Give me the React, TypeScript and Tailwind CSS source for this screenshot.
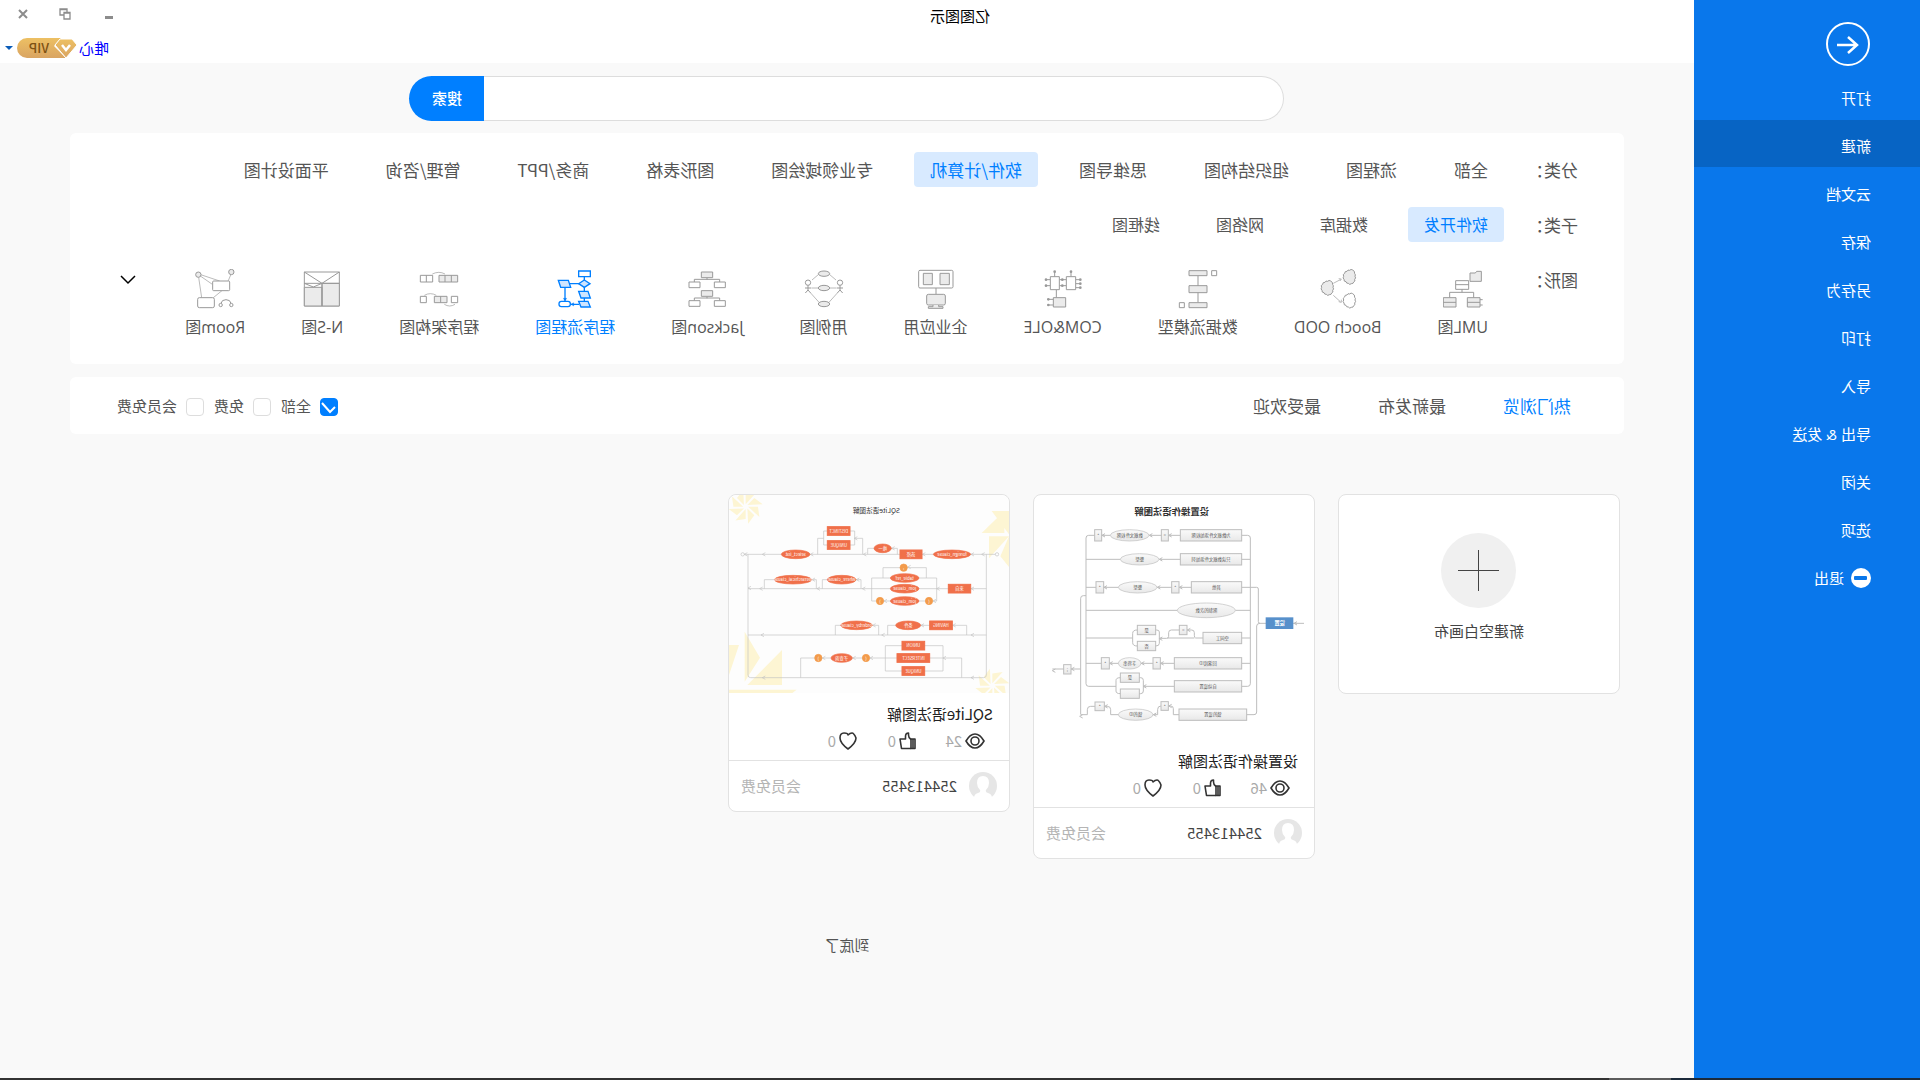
import type { ReactNode } from "react";
import clsx from "clsx";

const menuItems = ["打开", "新建", "云文档", "保存", "另存为", "打印", "导入", "导出 & 发送", "关闭", "选项"];

const categories = [
  "全部",
  "流程图",
  "组织结构图",
  "思维导图",
  "软件/计算机",
  "专业领域绘图",
  "图形表格",
  "商务/PPT",
  "管理/咨询",
  "平面设计图",
];

const subCategories = ["软件开发", "数据库", "网络图", "线框图"];

const sortTabs = ["热门浏览", "最新发布", "最受欢迎"];

const priceFilters = ["全部", "免费", "会员免费"];

const CLOUD =
  "M12 3 q5 -4 9 1 q6 -3 8 3 q7 -1 7 6 q7 3 3 9 q4 5 -1 9 q1 7 -6 7 q-1 6 -7 5 q-4 6 -9 1 q-6 1 -7 -5 q-6 -2 -3 -8 q-5 -4 -1 -9 q-3 -5 1 -8 q-1 -8 6 -11z";

function ShapeIcon({ children, active }: { children: ReactNode; active?: boolean }) {
  return (
    <svg
      viewBox="0 0 120 120"
      className={clsx("size-10", active ? "text-[#007fff]" : "text-[#999999]")}
      fill="#fff"
      stroke="currentColor"
      strokeWidth={active ? 4 : 3}
    >
      {children}
    </svg>
  );
}

const shapes: { name: string; active?: boolean; icon: ReactNode }[] = [
  {
    name: "UML图",
    icon: (
      <>
        <path d="M5 7h14l4 5h16v25H5z" fill="#ebebeb" />
        <path d="M43 35h39v26H43zM43 47h39" />
        <path d="M63 61v9M28 86V70h72v16" fill="none" />
        <path d="M9 86h38v28H9zM81 86h38v28H81z" fill="#ebebeb" />
        <path d="M9 100h38M81 100h38M1 92h8M1 108h8" />
      </>
    ),
  },
  {
    name: "Booch OOD",
    icon: (
      <>
        <path d={CLOUD} transform="translate(4 0)" fill="#ebebeb" />
        <path d={CLOUD} transform="translate(70 33)" fill="#ebebeb" />
        <path d={CLOUD} transform="translate(4 71)" />
        <path d="M74 43L53 32M74 79L53 98M58 29l-8 1 4 6M50 92v8l8-2" fill="none" strokeWidth="2" />
      </>
    ),
  },
  {
    name: "数据流模型",
    icon: (
      <>
        <path d="M60 20v80" />
        <path d="M33 5h54v15H33zM33 50h54v21H33zM33 101h54v15H33z" fill="#ebebeb" />
        <path d="M4 5h15v15H4zM101 101h15v15h-15z" />
      </>
    ),
  },
  {
    name: "COM&OLE",
    icon: (
      <>
        <path d="M36 23V8M85 23V8M22 32H8M22 44H8M22 56H8M50 32h21M50 50h21M98 32h12M98 50h12M80 62v24M89 91h14M89 108h14" />
        <path d="M22 23h28v39H22zM71 23h27v39H71z" />
        <path d="M52 86h37v28H52z" fill="#ebebeb" />
        <g fill="currentColor" stroke="none">
          {[
            [36, 8], [85, 8], [8, 32], [8, 44], [8, 56], [62, 32], [62, 50], [111, 32], [111, 50], [104, 91], [104, 108],
          ].map(([x, y]) => (
            <circle key={`${x}-${y}`} cx={x} cy={y} r="4" />
          ))}
        </g>
      </>
    ),
  },
  {
    name: "企业应用",
    icon: (
      <>
        <rect x="9" y="4" width="103" height="53" rx="4" />
        <path d="M20 13h28v34H20zM71 13h27v34H71z" fill="#ebebeb" />
        <path d="M60 57v19" />
        <rect x="32" y="76" width="56" height="32" rx="5" fill="#ebebeb" />
        <path d="M52 108v5h-13v5h44v-5H69v-5" fill="#ebebeb" />
      </>
    ),
  },
  {
    name: "用例图",
    icon: (
      <>
        <path d="M24 33L44 16M76 16l20 17M22 57h76M20 72l26 29M100 72l-26 29" strokeWidth="2" />
        <ellipse cx="60" cy="14" rx="17" ry="8" fill="#ebebeb" />
        <ellipse cx="60" cy="57" rx="17" ry="8" fill="#ebebeb" />
        <ellipse cx="60" cy="105" rx="17" ry="8" fill="#ebebeb" />
        <circle cx="12" cy="41" r="8" />
        <circle cx="108" cy="41" r="8" />
        <path d="M12 49v15M3 57h18M12 63l-8 9M12 63l8 9M108 49v15M99 57h18M108 63l-8 9M108 63l8 9" />
      </>
    ),
  },
  {
    name: "Jackson图",
    icon: (
      <>
        {[0, 56].map((y) => (
          <g key={y} transform={`translate(0 ${y})`}>
            <path d="M60 26v6M22 39v-8h76v8" fill="none" />
            <path d="M43 9h34v17H43z" fill="#ebebeb" />
            <path d="M5 39h33v17H5zM81 39h33v17H81z" />
          </g>
        ))}
      </>
    ),
  },
  {
    name: "程序流程图",
    active: true,
    icon: (
      <>
        <path d="M32 22v75M48 44h28M90 55v40M48 106h26" fill="none" />
        <path d="M14 6h35v17H14z" />
        <path d="M32 33l17 11-17 11-17-11z" fill="#cfe5ff" />
        <path d="M80 34h30l-7 21H73zM21 67h28l-7 20H14zM21 97h28l-7 17H14z" fill="#cfe5ff" />
        <rect x="74" y="97" width="34" height="16" rx="7" />
        <path d="M85 88l5 8 5-8zM64 101l8 5-8 5z" fill="currentColor" strokeWidth="1" />
      </>
    ),
  },
  {
    name: "程序架构图",
    icon: (
      <>
        <path d="M4 19h56v20H4z" fill="#ebebeb" />
        <path d="M23 19v20M42 19v20M79 19h37v20H79zM98 19v20" />
        <path d="M42 15q18 -10 38 0M68 79q18 -10 36 0M12 106q16 10 32 0" fill="none" strokeWidth="2" />
        <path d="M36 82h38v19H36z" fill="#ebebeb" />
        <path d="M55 82v19M4 82h19v19H4zM98 82h18v19H98z" />
      </>
    ),
  },
  {
    name: "N-S图",
    icon: (
      <>
        <path d="M8 9h105v102H8z" />
        <path d="M8 43h52v68H8zM60 55h53v56H60z" fill="#ebebeb" />
        <path d="M8 9l52 34 53-34M8 43h105M60 43v68M60 43l26 11 27-11" fill="none" />
      </>
    ),
  },
  {
    name: "Room图",
    icon: (
      <>
        <path d="M13 18l8 19M103 17L46 36M104 21L68 46M109 25l-9 61M38 64l27 22" strokeWidth="2" />
        <circle cx="11" cy="9" r="8" fill="#ebebeb" />
        <circle cx="110" cy="17" r="8" fill="#ebebeb" />
        <rect x="16" y="36" width="51" height="29" rx="3" />
        <rect x="62" y="86" width="50" height="30" rx="5" />
        <path d="M12 103q2 -11 15 -11t15 11" fill="none" />
        <circle cx="11" cy="108" r="5" />
        <circle cx="43" cy="108" r="5" />
      </>
    ),
  },
];

type Node = { k: "r" | "e" | "c"; x: number; y: number; w: number; h: number; t?: string };

const settingNodes: Node[] = [
  { k: "r", x: 217, y: 104, w: 184, h: 34, t: "为数据文件添加权限" },
  { k: "r", x: 437, y: 104, w: 21, h: 34, t: "=" },
  { k: "e", x: 495, y: 104, w: 116, h: 34, t: "数据文件权限" },
  { k: "r", x: 637, y: 104, w: 21, h: 34, t: "*" },
  { k: "r", x: 217, y: 176, w: 184, h: 34, t: "只读数据文件添加列" },
  { k: "e", x: 465, y: 176, w: 116, h: 34, t: "整型" },
  { k: "r", x: 217, y: 260, w: 151, h: 34, t: "其他" },
  { k: "r", x: 405, y: 260, w: 22, h: 34, t: "*" },
  { k: "e", x: 471, y: 260, w: 116, h: 34, t: "整型" },
  { k: "r", x: 631, y: 260, w: 23, h: 34, t: "*" },
  { k: "e", x: 236, y: 324, w: 174, h: 44, t: "限制的次数" },
  { k: "r", x: 217, y: 412, w: 116, h: 34, t: "空间工" },
  { k: "r", x: 381, y: 391, w: 23, h: 28, t: "=" },
  { k: "r", x: 475, y: 391, w: 55, h: 28, t: "是" },
  { k: "r", x: 475, y: 439, w: 55, h: 28, t: "否" },
  { k: "r", x: 217, y: 488, w: 202, h: 34, t: "回滚段ID" },
  { k: "r", x: 461, y: 488, w: 22, h: 34, t: "*" },
  { k: "e", x: 519, y: 488, w: 68, h: 34, t: "字符串" },
  { k: "r", x: 614, y: 488, w: 24, h: 34, t: "*" },
  { k: "r", x: 217, y: 557, w: 202, h: 34, t: "自动设置" },
  { k: "r", x: 524, y: 534, w: 57, h: 28, t: "是" },
  { k: "r", x: 524, y: 582, w: 57, h: 28 },
  { k: "r", x: 202, y: 642, w: 203, h: 34, t: "锁的设置" },
  { k: "r", x: 437, y: 620, w: 22, h: 26, t: "*" },
  { k: "e", x: 483, y: 642, w: 104, h: 34, t: "锁的ID" },
  { k: "r", x: 629, y: 621, w: 28, h: 26, t: "*" },
  { k: "r", x: 729, y: 509, w: 22, h: 28, t: ";" },
];

const sqliteNodes: Node[] = [
  { k: "e", x: 115, y: 165, w: 112, h: 26, t: "foreign_clause" },
  { k: "r", x: 261, y: 165, w: 66, h: 26, t: "选择" },
  { k: "e", x: 353, y: 147, w: 52, h: 26, t: "唯一" },
  { k: "r", x: 477, y: 95, w: 68, h: 26, t: "DISTINCT" },
  { k: "r", x: 477, y: 137, w: 68, h: 26, t: "UNIQUE" },
  { k: "e", x: 597, y: 165, w: 86, h: 26, t: "select_list" },
  { k: "r", x: 115, y: 268, w: 67, h: 26, t: "来自" },
  { k: "c", x: 305, y: 207, w: 22, h: 22, t: "," },
  { k: "e", x: 270, y: 236, w: 86, h: 26, t: "table_ref" },
  { k: "e", x: 270, y: 268, w: 86, h: 26, t: "join_clause" },
  { k: "e", x: 270, y: 305, w: 86, h: 26, t: "join_clause" },
  { k: "c", x: 229, y: 307, w: 22, h: 22, t: "(" },
  { k: "c", x: 376, y: 307, w: 22, h: 22, t: ")" },
  { k: "e", x: 459, y: 241, w: 86, h: 26, t: "where_clause" },
  { k: "e", x: 592, y: 241, w: 112, h: 26, t: "hierarchical_clause" },
  { k: "r", x: 170, y: 378, w: 68, h: 26, t: "HAVING" },
  { k: "e", x: 265, y: 378, w: 75, h: 26, t: "条件" },
  { k: "e", x: 410, y: 378, w: 95, h: 26, t: "orderby_clause" },
  { k: "r", x: 253, y: 439, w: 68, h: 26, t: "UNION" },
  { k: "r", x: 238, y: 476, w: 98, h: 26, t: "INTERSECT" },
  { k: "r", x: 253, y: 515, w: 68, h: 26, t: "UNIQUE" },
  { k: "c", x: 418, y: 478, w: 22, h: 22, t: "(" },
  { k: "e", x: 470, y: 476, w: 64, h: 26, t: "子查询" },
  { k: "c", x: 561, y: 478, w: 22, h: 22, t: ")" },
];

// Small arrow heads at the end of diagram connectors
function Arrows({ points }: { points: number[][] }) {
  return <path d={points.map(([x, y]) => `M${x - 9} ${y - 5}L${x} ${y}L${x - 9} ${y + 5}`).join("")} />;
}

function DiagramNode({ node, fill, stroke, color }: { node: Node; fill: string; stroke: string; color: string }) {
  const { k, x, y, w, h, t } = node;
  return (
    <g>
      {k === "r" ? (
        <rect x={x} y={y} width={w} height={h} fill={fill} stroke={stroke} strokeWidth="3" />
      ) : (
        <ellipse cx={x + w / 2} cy={y + h / 2} rx={w / 2} ry={h / 2} fill={fill} stroke={stroke} strokeWidth="2" />
      )}
      {t && (
        <text x={x + w / 2} y={y + h / 2 + 5} textAnchor="middle" fontSize="13" fill={color}>
          {t}
        </text>
      )}
    </g>
  );
}

function SettingDiagram() {
  return (
    <svg viewBox="0 0 840 735" className="w-full">
      <defs>
        <linearGradient id="nodeGrey" x1="0" y1="0" x2="0" y2="1">
          <stop offset="0" stopColor="#fafafa" />
          <stop offset="1" stopColor="#e8e8e8" />
        </linearGradient>
      </defs>
      <text x="427" y="59" textAnchor="middle" fontSize="28" fontWeight="700" fill="#333">
        设置操作语法图解
      </text>
      <g fill="none" stroke="#bdbdbd" strokeWidth="3">
        <path d="M30 385H162q5 0 5 -5V282q0 -5 5 -5H217M162 385q10 0 10 8V651q0 8 8 8H202" />
        <path d="M217 121H199q-8 0 -8 8V566q0 8 8 8H217M191 193H217M191 346H236M191 429H217M191 505H217" />
        <path d="M401 121H676q8 0 8 8V566q0 8 -8 8H594M401 193H684M368 277H684M410 346H684M419 505H684" />
        <path d="M333 429H355q4 0 4 -8V413q0 -8 8 -8H428q8 0 8 8V424q0 6 6 6H464V411q0 -6 8 -6H530q14 0 14 10V443q0 10 -14 10H475q-11 0 -11 -8V429M359 429H440M544 429H684" />
        <path d="M419 574H512V556q0 -8 8 -8H581q13 0 13 8V588q0 8 -13 8H520q-8 0 -8 -8V574" />
        <path d="M405 659H422V641q0 -8 8 -8H459q10 0 10 10V659H610V644q0 -10 10 -10H670q10 0 10 10V659H700" />
        <path d="M684 302H692q8 0 8 8V658M700 522H785" />
        <Arrows
          points={[[60, 385], [436, 121], [494, 121], [636, 121], [464, 193], [404, 277], [470, 277], [630, 277], [380, 405], [464, 431], [460, 505], [518, 505], [613, 505], [512, 574], [436, 633], [482, 659], [628, 634], [728, 522], [785, 527], [703, 664]]}
        />
      </g>
      {settingNodes.map((node, i) => (
        <DiagramNode key={i} node={node} fill="url(#nodeGrey)" stroke="#bdbdbd" color="#555" />
      ))}
      <rect x="62" y="367" width="83" height="35" fill="#5790cb" />
      <text x="103" y="391" textAnchor="middle" fontSize="16" fontWeight="700" fill="#fff">
        设置
      </text>
    </svg>
  );
}

function Pinwheel({ x, y, r }: { x: number; y: number; r: number }) {
  return (
    <g transform={`translate(${x} ${y}) scale(${r})`} fill="#fdf5d3">
      {[0, 45, 90, 135, 180, 225, 270, 315].map((a) => (
        <path key={a} d="M0.1 0.1L0.98 0.14L0.5 0.5z" transform={`rotate(${a})`} />
      ))}
    </g>
  );
}

function SqliteDiagram() {
  return (
    <svg viewBox="0 0 840 594" className="w-full rounded-t-lg bg-[#fdfdfd]">
      <Pinwheel x={790} y={35} r={52} />
      <Pinwheel x={50} y={572} r={52} />
      <g fill="#fdf5d3">
        <path d="M0 48h52L0 118zM14 48l68 66H14zM0 124h60v66zM0 124v92l26-32z" />
        <path d="M793 410v150l-46-72zM681 465v105h104zM637 584h203v10H650zM810 450h30v90z" />
      </g>
      <text x="398" y="54" textAnchor="middle" fontSize="20" fill="#333">
        SQLite语法图解
      </text>
      <g fill="none" stroke="#c2c2c2" strokeWidth="2">
        <circle cx="36" cy="178" r="5" />
        <circle cx="799" cy="178" r="5" />
        <path d="M41 178H794M68 178V540q0 8 8 8H775q8 0 8 -8V178M68 281H783M68 420H783" />
        <path d="M335 178V160H424V178M439 178V130H463V108H556V150H463V130M556 130H574V178" />
        <path d="M217 281V249H412V318H217V281M248 249V218H378V249M444 281V254H560V281M578 281V254H734V281" />
        <path d="M127 420V391H364V420M391 420V391H521V420" />
        <path d="M142 548V489H625V548M198 489V452H371V528H198V489" />
        <Arrows
          points={[[82, 178], [114, 178], [260, 178], [352, 160], [437, 178], [464, 130], [596, 178], [740, 178], [794, 178], [114, 281], [217, 281], [228, 318], [375, 318], [304, 216], [440, 281], [458, 254], [576, 281], [591, 254], [748, 281], [783, 279], [114, 420], [169, 391], [264, 391], [382, 420], [409, 391], [744, 420], [114, 548], [198, 489], [417, 489], [469, 489], [560, 489], [740, 548]]}
        />
      </g>
      {sqliteNodes.map((node, i) => (
        <DiagramNode
          key={i}
          node={node}
          fill={node.k === "c" ? "#f39b4b" : "#f0704a"}
          stroke={node.k === "c" ? "#f39b4b" : "#f0704a"}
          color="#fff"
        />
      ))}
    </svg>
  );
}

function EyeIcon() {
  return (
    <svg viewBox="0 0 20 18" className="w-5" fill="none" stroke="#333" strokeWidth="1.6">
      <path d="M1 9q4 -7 9 -7t9 7q-4 7 -9 7t-9 -7z" />
      <circle cx="10" cy="9" r="4" />
    </svg>
  );
}

function ThumbIcon() {
  return (
    <svg viewBox="0 0 17 18" className="w-[17px]" fill="none" stroke="#333" strokeWidth="1.6" strokeLinejoin="round">
      <path d="M1 7h4v9.500H1zM3 7v9.500" />
      <path d="M5 7.500Q7.500 6 7.500 3V1q3 0 3 3.500V7H16l-1.500 9.500H5" />
    </svg>
  );
}

function HeartIcon() {
  return (
    <svg viewBox="0 0 18 18" className="w-[18px]" fill="none" stroke="#333" strokeWidth="1.6" strokeLinejoin="round">
      <path d="M9 3Q7 1 5 1T1 6q0 5 8 11q8 -6 8 -11T13 1T9 3z" />
    </svg>
  );
}

function TemplateCard({ title, views, preview }: { title: string; views: number; preview: ReactNode }) {
  return (
    <article className="w-[282px] rounded-lg border border-[#e2e2e2] bg-white text-[15px]">
      {preview}
      <div className="h-[67px] px-4 pt-[9px]">
        <h3 className="leading-6 text-[#222]">{title}</h3>
        <div className="flex items-center pt-[3px] pl-2 leading-6 text-[#aaaaaa]">
          <button type="button" aria-label="浏览" className="flex w-[69px] items-center gap-[3px]">
            <EyeIcon />
            <span>{views}</span>
          </button>
          <button type="button" aria-label="点赞" className="flex w-[59px] items-center gap-[3px]">
            <ThumbIcon />
            <span>0</span>
          </button>
          <button type="button" aria-label="收藏" className="flex items-center gap-[3px]">
            <HeartIcon />
            <span>0</span>
          </button>
        </div>
      </div>
      <div className="flex h-[51px] items-center border-t border-[#e2e2e2] px-3">
        <svg viewBox="0 0 28 28" className="size-7">
          <circle cx="14" cy="14" r="14" fill="#e6e6e6" />
          <path d="M14 4q6 0 6 7q0 4 -3 7q-1 2 2 3q4 1 4 5q-4 3 -9 3t-9 -3q0 -4 4 -5q3 -1 2 -3q-3 -3 -3 -7q0 -7 6 -7z" fill="#fff" />
        </svg>
        <span className="pl-3 text-[#444]">254413455</span>
        <span className="ml-auto text-[#b5b5b5]">会员免费</span>
      </div>
    </article>
  );
}

function Sidebar() {
  return (
    <aside className="w-[226px] shrink-0 bg-[#0977eb] font-['Open_Sans','Noto_Sans_CJK_SC',sans-serif] text-[15px] text-white">
      <button type="button" aria-label="返回" className="mt-[22px] ml-[50px] block">
        <svg viewBox="0 0 44 44" className="size-11" fill="none" stroke="#fff" strokeWidth="2">
          <circle cx="22" cy="22" r="21" />
          <path d="M33 23H13M22 15l-9 8 9 8" strokeWidth="2.500" />
        </svg>
      </button>
      <nav className="pt-1.5">
        <ul>
          {menuItems.map((item) => (
            <li key={item}>
              <a
                href="#"
                className={clsx("mb-px flex h-[47px] items-center pt-[5px] pl-[49px]", item === "新建" && "bg-[#0764c4]")}
              >
                {item}
              </a>
            </li>
          ))}
          <li>
            <a href="#" className="flex h-12 items-center gap-[7px] pt-1 pl-[49px]">
              <svg viewBox="0 0 20 20" className="size-5">
                <circle cx="10" cy="10" r="10" fill="#fff" />
                <rect x="4" y="8" width="13" height="4" rx="1" fill="#0977eb" />
              </svg>
              退出
            </a>
          </li>
        </ul>
      </nav>
    </aside>
  );
}

function Header() {
  return (
    <header className="grid h-[63px] grid-cols-[1fr_226px] bg-white">
      <h1 className="pt-1 text-center text-[15px] leading-6 text-black">亿图图示</h1>
      <div className="text-[#8c8c8c]">
        <div className="flex h-7 items-center justify-end gap-[30px] pr-[17px]">
          <button type="button" aria-label="最小化">
            <svg viewBox="0 0 12 12" className="size-3">
              <path d="M0 8h8v3H0z" fill="currentColor" />
            </svg>
          </button>
          <button type="button" aria-label="还原">
            <svg viewBox="0 0 12 12" className="size-3" fill="none" stroke="currentColor" strokeWidth="1.300">
              <path d="M1 4.500h6V11H1zM1 5h6M4 4V1h7v6H7M4 1.500h7" />
            </svg>
          </button>
          <button type="button" aria-label="关闭">
            <svg viewBox="0 0 12 12" className="size-3" fill="none" stroke="currentColor" strokeWidth="2">
              <path d="M2 2l8 8M10 2l-8 8" />
            </svg>
          </button>
        </div>
        <div className="flex h-10 items-center justify-end gap-0.5 pr-[5px]">
          <a href="#" className="text-[15px] text-[#0000ff]">
            唯心
          </a>
          <svg viewBox="0 0 60 20" className="w-[60px]">
            <defs>
              <linearGradient id="gold" x1="0" y1="0" x2="0" y2="1">
                <stop offset="0" stopColor="#edc063" />
                <stop offset="1" stopColor="#d9a462" />
              </linearGradient>
            </defs>
            <path d="M16 0H50a10 10 0 0 1 0 20H11L23 8z" fill="url(#gold)" />
            <path d="M5 1H17L22 7L11 20L0 7z" fill="url(#gold)" stroke="#fff" />
            <path d="M7 7l4 5 4-5" fill="none" stroke="#fff" strokeWidth="2.500" />
            <text x="28" y="15" fontSize="13" fontWeight="500" fill="#7d5213">
              VIP
            </text>
          </svg>
          <button type="button" aria-label="账户菜单" className="pl-0.5">
            <svg viewBox="0 0 8 6" className="w-2">
              <path d="M0 1h8L4 5z" fill="#0b5cb8" />
            </svg>
          </button>
        </div>
      </div>
    </header>
  );
}

function FilterRow({ label, children }: { label: string; children: ReactNode }) {
  return (
    <div className="flex items-start">
      <span className="w-[74px] shrink-0 text-[17px] leading-[35px]">{label}</span>
      {children}
    </div>
  );
}

export default function App() {
  return (
    <div className="flex min-h-screen -scale-x-100 flex-col bg-[#f9f9f9] font-['Noto_Sans_CJK_SC',sans-serif] text-[#555555]">
      <div className="flex flex-1">
        <Sidebar />

        <div className="min-w-0 flex-1">
          <Header />

          <main className="px-[70px] pt-[13px]">
            {/* Search */}
            <form className="mx-auto flex h-[45px] w-[875px] max-w-full">
              <input
                type="text"
                aria-label="搜索模板"
                className="min-w-0 flex-1 rounded-l-full border border-r-0 border-[#dddddd] bg-white px-6 text-[15px] outline-none"
              />
              <button type="button" className="w-[75px] rounded-r-full bg-[#007fff] text-[15px] font-medium text-white">
                搜索
              </button>
            </form>

            {/* Filters */}
            <section className="mt-3 rounded-md bg-white pt-[19px] pb-[25px] pl-[46px]">
              <FilterRow label="分类：">
                <div className="flex flex-wrap gap-x-[25px] text-[17px]">
                  {categories.map((name) => (
                    <button
                      key={name}
                      type="button"
                      className={clsx("h-[35px] rounded px-4", name === "软件/计算机" && "bg-[#d8eaff] text-[#007fff]")}
                    >
                      {name}
                    </button>
                  ))}
                </div>
              </FilterRow>
              <div className="pt-5">
                <FilterRow label="子类：">
                  <div className="flex flex-wrap gap-x-6 font-['Open_Sans','Noto_Sans_CJK_SC',sans-serif] text-base">
                    {subCategories.map((name) => (
                      <button
                        key={name}
                        type="button"
                        className={clsx("h-[35px] rounded px-4", name === "软件开发" && "bg-[#d8eaff] text-[#007fff]")}
                      >
                        {name}
                      </button>
                    ))}
                  </div>
                </FilterRow>
              </div>
              <div className="flex items-start pt-5">
                <FilterRow label="图形：">
                  <div className="flex flex-wrap gap-x-6 pt-[7px] font-['Open_Sans','Noto_Sans_CJK_SC',sans-serif] text-base">
                    {shapes.map(({ name, active, icon }) => (
                      <button
                        key={name}
                        type="button"
                        className={clsx("flex flex-col items-center gap-1.5 px-4", active && "text-[#007fff]")}
                      >
                        <ShapeIcon active={active}>{icon}</ShapeIcon>
                        {name}
                      </button>
                    ))}
                  </div>
                </FilterRow>
                <button type="button" aria-label="展开" className="mt-[13px] mr-[50px] ml-auto">
                  <svg viewBox="0 0 16 10" className="w-4" fill="none" stroke="#000" strokeWidth="1.500">
                    <path d="M1 1l7 7 7-7" />
                  </svg>
                </button>
              </div>
            </section>

            {/* Sort and price */}
            <section className="mt-[13px] flex h-[57px] items-center justify-between rounded-md bg-white pr-[47px] pl-[53px]">
              <div className="flex gap-[57px] text-[17px]">
                {sortTabs.map((name, i) => (
                  <button key={name} type="button" className={clsx(i === 0 && "text-[#007fff]")}>
                    {name}
                  </button>
                ))}
              </div>
              <div className="flex gap-2.5 pt-0.5 text-[15px]">
                {priceFilters.map((name, i) => (
                  <label key={name} className="flex items-center gap-[9px]">
                    <span className="grid">
                      <input
                        type="checkbox"
                        defaultChecked={i === 0}
                        className="peer col-start-1 row-start-1 size-[18px] appearance-none rounded border border-[#dddddd] bg-white checked:border-[#007fff] checked:bg-[#007fff]"
                      />
                      <svg
                        viewBox="0 0 18 18"
                        className="pointer-events-none col-start-1 row-start-1 hidden size-[18px] peer-checked:block"
                        fill="none"
                        stroke="#fff"
                        strokeWidth="2"
                      >
                        <path d="M3 9l5 5 8-9" />
                      </svg>
                    </span>
                    {name}
                  </label>
                ))}
              </div>
            </section>

            {/* Templates */}
            <section className="mt-[60px] flex flex-wrap items-start gap-[23px] pl-1">
              <button
                type="button"
                className="flex h-[200px] w-[282px] flex-col items-center rounded-lg border border-[#e2e2e2] bg-white pt-[38px] text-[15px] text-[#444]"
              >
                <svg viewBox="0 0 75 75" className="w-[75px]">
                  <circle cx="37.500" cy="37.500" r="37.500" fill="#f0f0f0" />
                  <path d="M37.500 17v41M17 37.500h41" stroke="#444" />
                </svg>
                <span className="pt-[11px] leading-6">新建空白画布</span>
              </button>
              <TemplateCard title="设置操作语法图解" views={46} preview={<SettingDiagram />} />
              <TemplateCard title="SQLite语法图解" views={24} preview={<SqliteDiagram />} />
            </section>

            <p className="pt-[75px] text-center text-[15px]">到底了</p>
          </main>
        </div>
      </div>

      {/* Taskbar edge */}
      <footer className="flex h-0.5 bg-[#333333]">
        <div className="w-[249px] bg-[#1c2a3a]" />
        <div className="w-[62px] bg-[#5c5c5c]" />
      </footer>
    </div>
  );
}
